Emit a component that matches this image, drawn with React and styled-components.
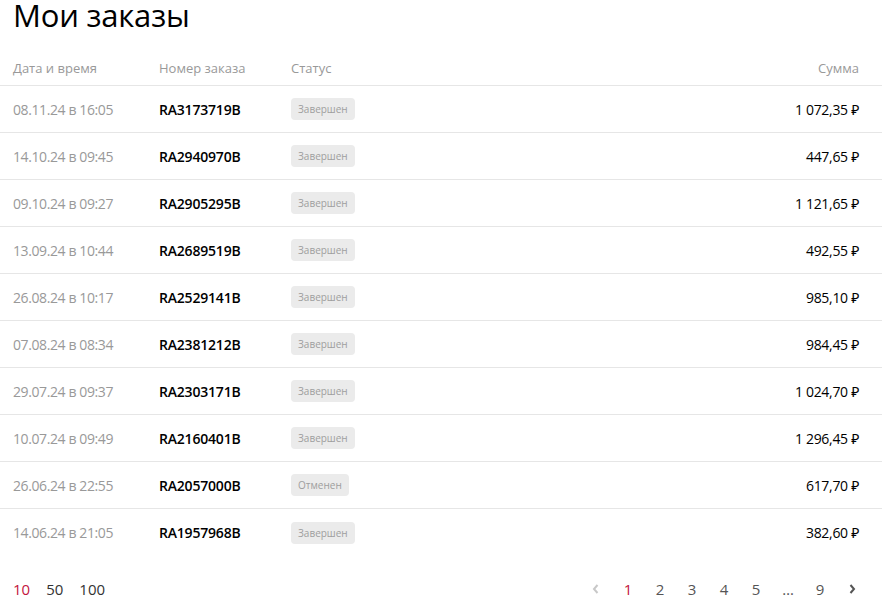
import React from "react";
import styled, { createGlobalStyle } from "styled-components";

const Global = createGlobalStyle`
  html, body { margin: 0; padding: 0; background: #fff; }
  body { font-family: "Open Sans", "Noto Sans", sans-serif; color: #000; }
`;

const Page = styled.div`
  width: 882px;
  min-height: 616px;
  display: flex;
  flex-direction: column;
  box-sizing: border-box;
`;

const Title = styled.h1`
  margin: 0;
  padding: 0 13px;
  font-size: 31px;
  font-weight: 400;
  line-height: 30px;
  letter-spacing: -0.2px;
`;

const Table = styled.div`
  display: flex;
  flex-direction: column;
  margin-top: 21px;
`;

const Row = styled.div`
  display: grid;
  grid-template-columns: 146px 132px 1fr auto;
  align-items: center;
  padding: 0 23px 0 13px;
  height: ${(p) => (p.$head ? "35px" : "47px")};
  border-bottom: ${(p) => (p.$last ? "none" : "1px solid #e6e6e6")};
  box-sizing: border-box;
`;

const HeadCell = styled.div`
  font-size: 13px;
  color: #999;
  text-align: ${(p) => (p.$right ? "right" : "left")};
`;

const DateCell = styled.div`
  font-size: 14px;
  color: #999;
  letter-spacing: -0.4px;
`;

const Num = styled.div`
  font-size: 14px;
  font-weight: 600;
  color: #000;
  letter-spacing: -0.2px;
`;

const Badge = styled.span`
  justify-self: start;
  display: inline-flex;
  align-items: center;
  height: 22px;
  padding: 0 7px;
  border-radius: 4px;
  background: #ebebeb;
  color: #9e9e9e;
  font-size: 10px;
`;

const Sum = styled.div`
  font-size: 14px;
  color: #000;
  text-align: right;
  letter-spacing: -0.3px;
`;

const Footer = styled.div`
  display: flex;
  justify-content: space-between;
  align-items: center;
  padding: 0 14px 0 13px;
  margin-top: 23px;
`;

const Sizes = styled.div`
  display: flex;
  gap: 16px;
`;

const SizeItem = styled.span`
  font-size: 15px;
  color: ${(p) => (p.$active ? "#c3153d" : "#333")};
`;

const Pager = styled.div`
  display: flex;
  align-items: center;
`;

const PageItem = styled.span`
  width: 32px;
  text-align: center;
  font-size: 15px;
  color: ${(p) => (p.$active ? "#c3153d" : "#555")};
  display: inline-flex;
  justify-content: center;
  align-items: center;
`;

const orders = [
  ["08.11.24 в 16:05", "RA3173719B", "Завершен", "1 072,35 ₽"],
  ["14.10.24 в 09:45", "RA2940970B", "Завершен", "447,65 ₽"],
  ["09.10.24 в 09:27", "RA2905295B", "Завершен", "1 121,65 ₽"],
  ["13.09.24 в 10:44", "RA2689519B", "Завершен", "492,55 ₽"],
  ["26.08.24 в 10:17", "RA2529141B", "Завершен", "985,10 ₽"],
  ["07.08.24 в 08:34", "RA2381212B", "Завершен", "984,45 ₽"],
  ["29.07.24 в 09:37", "RA2303171B", "Завершен", "1 024,70 ₽"],
  ["10.07.24 в 09:49", "RA2160401B", "Завершен", "1 296,45 ₽"],
  ["26.06.24 в 22:55", "RA2057000B", "Отменен", "617,70 ₽"],
  ["14.06.24 в 21:05", "RA1957968B", "Завершен", "382,60 ₽"],
];

const Chevron = ({ dir, color }) => (
  <svg width="10" height="12" viewBox="0 0 10 12">
    <path
      d={dir === "left" ? "M6.5 2 L3 6 L6.5 10" : "M3.5 2 L7 6 L3.5 10"}
      fill="none"
      stroke={color}
      strokeWidth="2"
    />
  </svg>
);

export default function App() {
  return (
    <Page>
      <Global />
      <Title>Мои заказы</Title>
      <Table>
        <Row $head>
          <HeadCell>Дата и время</HeadCell>
          <HeadCell>Номер заказа</HeadCell>
          <HeadCell>Статус</HeadCell>
          <HeadCell $right>Сумма</HeadCell>
        </Row>
        {orders.map((o, i) => (
          <Row key={o[1]} $last={i === orders.length - 1}>
            <DateCell>{o[0]}</DateCell>
            <Num>{o[1]}</Num>
            <Badge>{o[2]}</Badge>
            <Sum>{o[3]}</Sum>
          </Row>
        ))}
      </Table>
      <Footer>
        <Sizes>
          <SizeItem $active>10</SizeItem>
          <SizeItem>50</SizeItem>
          <SizeItem>100</SizeItem>
        </Sizes>
        <Pager>
          <PageItem>
            <Chevron dir="left" color="#c8c8c8" />
          </PageItem>
          <PageItem $active>1</PageItem>
          <PageItem>2</PageItem>
          <PageItem>3</PageItem>
          <PageItem>4</PageItem>
          <PageItem>5</PageItem>
          <PageItem>…</PageItem>
          <PageItem>9</PageItem>
          <PageItem>
            <Chevron dir="right" color="#555" />
          </PageItem>
        </Pager>
      </Footer>
    </Page>
  );
}
